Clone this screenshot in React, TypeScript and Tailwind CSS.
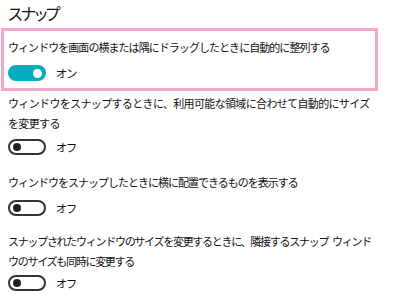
import React from "react";

const font = { fontFamily: '"Noto Sans CJK JP", "Noto Sans", sans-serif' };

function Toggle({ on }: { on: boolean }) {
  return (
    <div className="flex items-center h-[20px]">
      {on ? (
        <div className="w-[38px] h-[16px] rounded-full bg-[#00aebf] flex items-center justify-end pr-[4px]">
          <div className="w-[9px] h-[9px] rounded-full bg-white" />
        </div>
      ) : (
        <div className="w-[38px] h-[16px] rounded-full border-2 border-[#333] flex items-center pl-[3px]">
          <div className="w-[8px] h-[8px] rounded-full bg-[#222]" />
        </div>
      )}
      <span className="ml-[10px] text-[11.5px] [font-feature-settings:'palt'] leading-[20px] text-[#111]">{on ? "オン" : "オフ"}</span>
    </div>
  );
}

const txt = "text-[11px] leading-[20px] whitespace-nowrap";

export default function App() {
  return (
    <div className="w-[400px] h-[304px] bg-white overflow-hidden text-[#111]" style={font}>
      <div className="pl-[8px] pt-[1px] h-[25px] text-[16px] tracking-[-1.5px] [font-feature-settings:'palt'] leading-[24px] text-[#111]">スナップ</div>
      <div className="ml-[1px] mt-[3px] w-[377px] border-[3px] border-[#f2a9c9] pl-[4px] pt-[6px] pb-[5px]">
        <div className={txt + " tracking-[-0.95px]"}>ウィンドウを画面の横または隅にドラッグしたときに自動的に整列する</div>
        <div className="mt-[6px]"><Toggle on={true} /></div>
      </div>
      <div className="pl-[8px]">
        <div className={"mt-[2px] tracking-[-0.65px] " + txt}>
          ウィンドウをスナップするときに、利用可能な領域に合わせて自動的にサイズ<br />を変更する
        </div>
        <div className="mt-[4px]"><Toggle on={false} /></div>
        <div className={"mt-[15px] tracking-[-1px] " + txt}>
          ウィンドウをスナップしたときに横に配置できるものを表示する
        </div>
        <div className="mt-[6px]"><Toggle on={false} /></div>
        <div className={"mt-[13px] tracking-[-1.28px] " + txt}>
          スナップされたウィンドウのサイズを変更するときに、隣接するスナップ<span className="inline-block w-[4px]"> </span>ウィンド<br />ウのサイズも同時に変更する
        </div>
        <div className="mt-[2px]"><Toggle on={false} /></div>
      </div>
    </div>
  );
}
